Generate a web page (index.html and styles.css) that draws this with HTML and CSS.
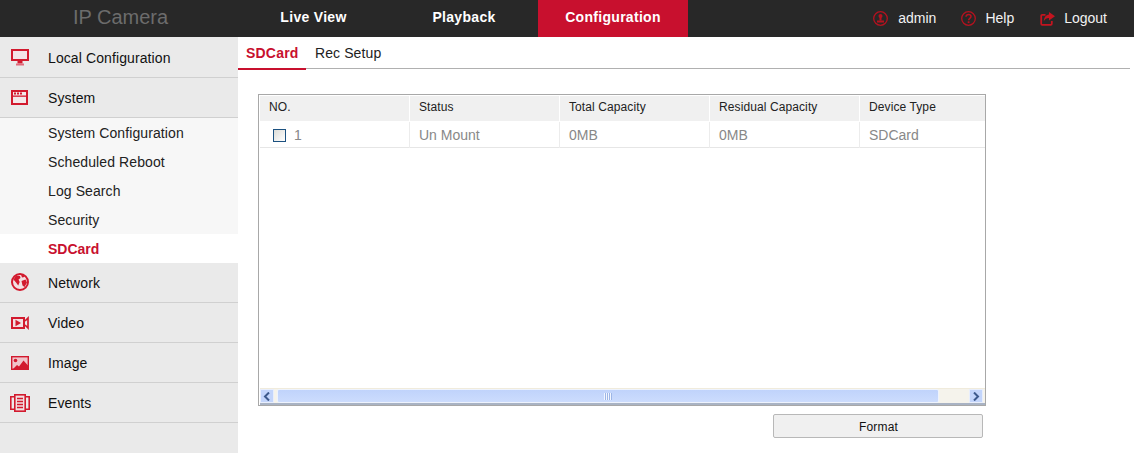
FILE: index.html
```html
<!DOCTYPE html>
<html lang="en">
<head>
<meta charset="utf-8">
<title>IP Camera</title>
<link rel="stylesheet" href="styles.css">
</head>
<body>
<header class="topbar">
  <div class="brand">IP Camera</div>
  <nav class="mainnav">
    <a class="mainnav-item mainnav-live">Live View</a>
    <a class="mainnav-item mainnav-play">Playback</a>
    <a class="mainnav-item mainnav-config">Configuration</a>
  </nav>
  <div class="usernav">
    <span class="usernav-item usernav-admin">
      <svg class="uicon" width="15" height="15" viewBox="0 0 15 15"><circle cx="7.500" cy="7.500" r="6.800" fill="none" stroke="#b5121f" stroke-width="1.300"/><circle cx="7.500" cy="5" r="2" fill="#b5121f"/><rect x="6.500" y="6" width="2" height="3.500" fill="#b5121f"/><rect x="4" y="9.500" width="7" height="2" fill="#b5121f"/></svg>
      admin
    </span>
    <span class="usernav-item usernav-help">
      <svg class="uicon" width="15" height="15" viewBox="0 0 15 15"><circle cx="7.500" cy="7.500" r="6.800" fill="none" stroke="#b5121f" stroke-width="1.300"/><path d="M5 5.800C5.100 4.300 6.200 3.500 7.500 3.500c1.500 0 2.500.9 2.500 2.100 0 1.800-2.400 1.800-2.400 3.700" fill="none" stroke="#b5121f" stroke-width="1.500"/><rect x="6.700" y="10.300" width="1.800" height="1.800" fill="#b5121f"/></svg>
      Help
    </span>
    <span class="usernav-item usernav-logout">
      <svg class="uicon" width="15" height="15" viewBox="0 0 15 15"><path d="M5.500 3.800H2.200a1 1 0 0 0-1 1v8a1 1 0 0 0 1 1h8.600a1 1 0 0 0 1-1V10" fill="none" stroke="#c4141f" stroke-width="1.800"/><path d="M9 1l6 4.300L9 9.500V7C6.500 7 5 8 3.800 10.300 4 6.300 6 3.900 9 3.500z" fill="#c4141f"/></svg>
      Logout
    </span>
  </div>
</header>
<div class="page">
  <aside class="sidebar">
    <div class="menu-row">
      <svg class="micon" width="20" height="20" viewBox="0 0 20 20"><rect x="2" y="3" width="16" height="10" fill="#f3e4e6" stroke="#d21a2e" stroke-width="2"/><rect x="7.500" y="14" width="5" height="2.500" fill="#d21a2e"/><rect x="6" y="16.500" width="8" height="2" fill="#e2697a"/></svg>
      <span>Local Configuration</span>
    </div>
    <div class="menu-row">
      <svg class="micon" width="20" height="20" viewBox="0 0 20 20"><rect x="2" y="4" width="15" height="13" fill="#f3e9ea" stroke="#d21a2e" stroke-width="2"/><rect x="2" y="8.500" width="15" height="1.300" fill="#d21a2e"/><rect x="4" y="5.500" width="2" height="2" fill="#d21a2e"/><rect x="7" y="5.500" width="2" height="2" fill="#d21a2e"/><rect x="10" y="5.500" width="2" height="2" fill="#d21a2e"/></svg>
      <span>System</span>
    </div>
    <div class="submenu">
      <div class="sub-row">System Configuration</div>
      <div class="sub-row">Scheduled Reboot</div>
      <div class="sub-row">Log Search</div>
      <div class="sub-row">Security</div>
      <div class="sub-row sub-active">SDCard</div>
    </div>
    <div class="menu-row">
      <svg class="micon" width="20" height="20" viewBox="0 0 20 20"><circle cx="10" cy="10" r="8" fill="#f3e0e3" stroke="#d21a2e" stroke-width="2"/><path d="M3.500 7.500l2.500-4 4 .5.500 2-2 1.500 1.200 2.500-1.500 3.500-2.200-3zM11.500 9l4-1.500 1.500 3-2.500 4.500-2-1.500zM11 2.500l3 1 .5 1.500-2.500.5z" fill="#d21a2e"/></svg>
      <span>Network</span>
    </div>
    <div class="menu-row">
      <svg class="micon" width="20" height="20" viewBox="0 0 20 20"><rect x="2" y="6" width="12" height="10" fill="#f3dfe2" stroke="#d21a2e" stroke-width="2"/><path d="M5.500 7.800l5.500 3.200-5.500 3.200z" fill="#d21a2e"/><path d="M15 9l3-3v10l-3-3" fill="none" stroke="#d21a2e" stroke-width="1.700"/></svg>
      <span>Video</span>
    </div>
    <div class="menu-row">
      <svg class="micon" width="20" height="20" viewBox="0 0 20 20"><rect x="1.700" y="4.700" width="16.600" height="12.600" fill="#f0c4ca" stroke="#d21a2e" stroke-width="1.400"/><circle cx="5.500" cy="8.500" r="1.800" fill="#d21a2e"/><path d="M3 17l4-4 2 1.500 4.500-6 4.500 5V17z" fill="#d21a2e"/></svg>
      <span>Image</span>
    </div>
    <div class="menu-row">
      <svg class="micon" width="20" height="20" viewBox="0 0 20 20"><rect x="4.800" y="2.800" width="10.400" height="16.400" fill="#f3dfe2" stroke="#d21a2e" stroke-width="1.600"/><path d="M4 4.800H.8v12.400H4M16 4.800h3.200v12.400H16" fill="none" stroke="#d21a2e" stroke-width="1.600"/><path d="M7 6.500h6M7 9.500h6M7 12.500h6M7 15.500h6" stroke="#d21a2e" stroke-width="1.500"/></svg>
      <span>Events</span>
    </div>
  </aside>
  <main class="content">
    <div class="tabs">
      <div class="tab tab-active">SDCard</div>
      <div class="tab">Rec Setup</div>
    </div>
    <div class="panel">
      <div class="grid-scroll">
        <div class="cols cols-head">
          <div class="cell">NO.</div>
          <div class="cell">Status</div>
          <div class="cell">Total Capacity</div>
          <div class="cell">Residual Capacity</div>
          <div class="cell">Device Type</div>
        </div>
        <div class="cols cols-row">
          <div class="cell cell-check"><span class="checkbox"></span>1</div>
          <div class="cell">Un Mount</div>
          <div class="cell">0MB</div>
          <div class="cell">0MB</div>
          <div class="cell">SDCard</div>
        </div>
      </div>
      <div class="hscroll">
        <div class="sbtn"><svg width="8" height="9" viewBox="0 0 8 9"><path d="M6 .5L2 4.500l4 4" fill="none" stroke="#3d5a8c" stroke-width="2"/></svg></div>
        <div class="thumb"><span class="grip"></span></div>
        <div class="track"></div>
        <div class="sbtn"><svg width="8" height="9" viewBox="0 0 8 9"><path d="M2 .5l4 4-4 4" fill="none" stroke="#3d5a8c" stroke-width="2"/></svg></div>
      </div>
    </div>
    <div class="actions"><button class="format-btn" type="button">Format</button></div>
  </main>
</div>
</body>
</html>
```
FILE: styles.css
```css
* { box-sizing: border-box; }
html, body { margin: 0; height: 100%; }
body {
  width: 1134px;
  height: 453px;
  overflow: hidden;
  background: #fff;
  font-family: "Liberation Sans", Arial, sans-serif;
  font-size: 14px;
  color: #222;
}
.topbar {
  display: flex;
  height: 37px;
  background: #282828;
  align-items: stretch;
}
.brand {
  width: 241px;
  text-align: center;
  font-size: 20px;
  line-height: 35px;
  color: #6c6c6c;
}
.mainnav { display: flex; align-items: stretch; }
.mainnav-item {
  font-size: 14px;
  font-weight: 700;
  letter-spacing: .3px;
  color: #fff;
  line-height: 35px;
  text-align: center;
}
.mainnav-live { width: 146px; padding-right: 1px; }
.mainnav-play { width: 151px; padding-left: 3px; }
.mainnav-config { width: 150px; background: #c8102e; }
.usernav {
  margin-left: auto;
  display: flex;
  align-items: center;
  padding-right: 27px;
  color: #f2f2f2;
  font-size: 14px;
}
.usernav-item { display: flex; align-items: center; gap: 9px; padding-bottom: 1px; }
.usernav-admin { gap: 10px; }
.usernav-help { margin-left: 25px; }
.usernav-logout { margin-left: 26px; }
.page { display: flex; height: 416px; }
.sidebar {
  width: 238px;
  flex: none;
  padding-top: 1px;
  background: #eaeaea;
  letter-spacing: .1px;
}
.menu-row {
  display: flex;
  align-items: center;
  height: 40px;
  border-bottom: 1px solid #d0d0d0;
  color: #111;
  padding-left: 10px;
  padding-bottom: 1px;
}
.menu-row span { padding-top: 2px; }
.micon { flex: none; margin-right: 18px; }
.submenu { background: #f7f7f7; }
.sub-row {
  height: 29px;
  line-height: 29px;
  padding: 1px 0 0 48px;
  color: #222;
}
.sub-active {
  background: #fff;
  color: #c8102e;
  font-weight: 700;
  letter-spacing: 0;
}
.content { flex: 1; min-width: 0; padding-right: 4px; }
.tabs {
  display: flex;
  height: 32px;
  border-bottom: 1px solid #b0b0b0;
  letter-spacing: .1px;
}
.tab {
  padding: 0 8px;
  line-height: 32px;
  height: 33px;
  color: #222;
  margin-left: 1px;
}
.tab-active {
  width: 68px;
  margin-left: 0;
  color: #c8102e;
  font-weight: 700;
  letter-spacing: .2px;
  border-bottom: 2px solid #c8102e;
}
.panel {
  display: flex;
  flex-direction: column;
  width: 728px;
  height: 312px;
  margin: 25px 0 0 20px;
  border: 1px solid #a8a8a8;
  padding: 1px 0 0 1px;
}
.grid-scroll { flex: 1; min-height: 0; overflow: hidden; }
.cols {
  display: grid;
  grid-template-columns: repeat(5, 150px);
  width: 726px;
}
.cols-head {
  height: 26px;
  background: #f0f0f0;
  border-bottom: 1px solid #fff;
  font-size: 12px;
  letter-spacing: .1px;
  line-height: 23px;
  color: #222;
}
.cols-row {
  height: 26px;
  border-bottom: 1px solid #e6e6e6;
  color: #888;
  line-height: 26px;
}
.cell {
  padding-left: 9px;
  border-right: 1px solid #ececec;
  white-space: nowrap;
}
.cols-head .cell { border-right-color: #fff; }
.cols-row .cell:last-child, .cols-head .cell:last-child { border-right: 0; }
.cell-check { display: flex; align-items: center; padding-left: 13px; gap: 8px; }
.checkbox {
  width: 13px;
  height: 13px;
  border: 1px solid #1c5180;
  background: linear-gradient(135deg, #dcdcd7, #fff);
}
.hscroll {
  display: flex;
  height: 17px;
  flex: none;
  background: #f5f3ec;
  border-top: 1px solid #f0ebdc;
  border-bottom: 2px solid #a9b3c4;
}
.sbtn {
  width: 14px;
  display: flex;
  align-items: center;
  justify-content: center;
  background: #c3d5fb;
  border: 1px solid #e8eefc;
  margin-right: 2px;
}
.thumb {
  width: 662px;
  display: flex;
  align-items: center;
  justify-content: center;
  background: linear-gradient(#c0d3fb, #ccdcfd);
  border: 1px solid #eef3fd;
  border-radius: 2px;
  margin-left: 1px;
}
.grip {
  width: 8px;
  height: 7px;
  background: repeating-linear-gradient(90deg, #f2f6ff 0 1px, #9db6e6 1px 2px);
}
.track { flex: 1; }
.actions { padding: 8px 0 0 535px; }
.format-btn {
  display: block;
  width: 210px;
  height: 24px;
  padding: 1px 0 0 1px;
  font: 12px "Liberation Sans", Arial, sans-serif;
  letter-spacing: .2px;
  color: #111;
  background: #f0f0f0;
  border: 1px solid #b8b8b8;
  border-radius: 2px;
}
```
